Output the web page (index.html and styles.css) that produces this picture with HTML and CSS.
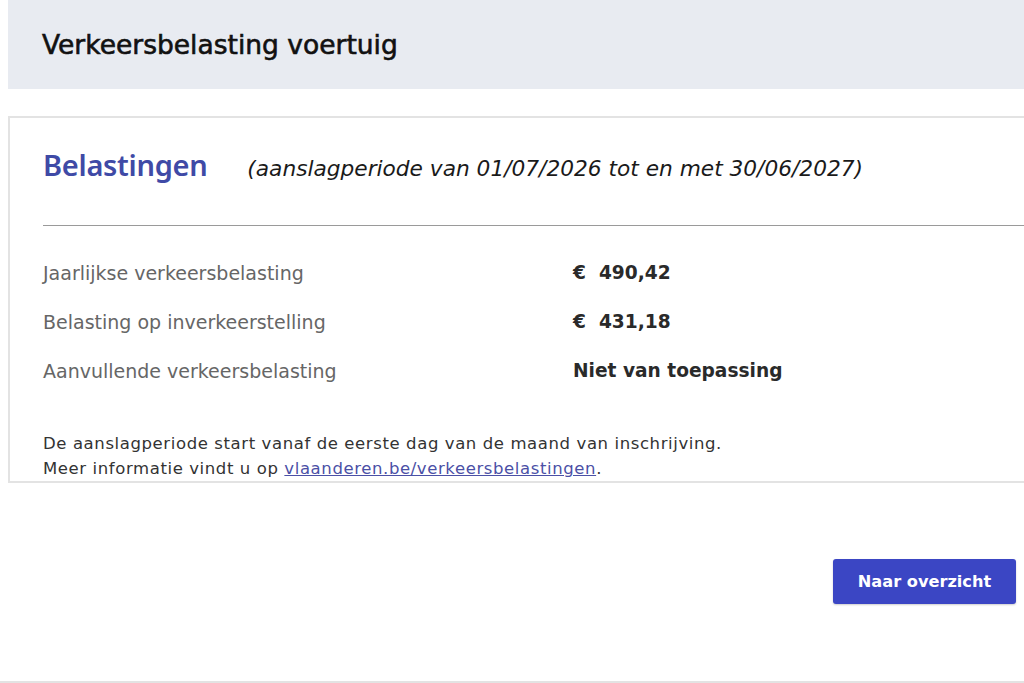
FILE: index.html
```html
<!DOCTYPE html>
<html lang="nl">
<head>
<meta charset="utf-8">
<title>Verkeersbelasting voertuig</title>
<link rel="stylesheet" href="styles.css">
</head>
<body>
<div class="page">
  <header class="page-header">
    <h1 class="page-title">Verkeersbelasting voertuig</h1>
  </header>
  <section class="card">
    <div class="card-head">
      <h2 class="card-title">Belastingen</h2>
      <span class="card-period">(aanslagperiode van 01/07/2026 tot en met 30/06/2027)</span>
    </div>
    <hr class="divider">
    <dl class="rows">
      <div class="row"><dt>Jaarlijkse verkeersbelasting</dt><dd>€&nbsp; 490,42</dd></div>
      <div class="row"><dt>Belasting op inverkeerstelling</dt><dd>€&nbsp; 431,18</dd></div>
      <div class="row"><dt>Aanvullende verkeersbelasting</dt><dd>Niet van toepassing</dd></div>
    </dl>
    <p class="note">De aanslagperiode start vanaf de eerste dag van de maand van inschrijving.<br>Meer informatie vindt u op <a href="#" class="link">vlaanderen.be/verkeersbelastingen</a>.</p>
  </section>
  <div class="actions">
    <button class="btn" type="button">Naar overzicht</button>
  </div>
  <div class="bottom-line"></div>
</div>
</body>
</html>
```
FILE: styles.css
```css
html, body {
  margin: 0;
  padding: 0;
  background: #fff;
  overflow: hidden;
}
body {
  font-family: "DejaVu Sans", "Noto Sans", sans-serif;
  color: #222;
  width: 1024px;
  height: 683px;
}
.page {
  margin-left: 8px;
  margin-right: -20px;
  display: flex;
  flex-direction: column;
  height: 683px;
}
.page-header {
  background: #e8ebf1;
  height: 89px;
  display: flex;
  align-items: center;
  padding-left: 34px;
}
.page-title {
  margin: 0;
  font-size: 26.5px;
  font-weight: 400;
  color: #111;
  -webkit-text-stroke: 0.6px #111;
}
.card {
  margin-top: 27px;
  border: 2px solid #e3e3e3;
  padding: 27px 0 0 33px;
}
.card-head {
  display: flex;
  align-items: baseline;
  gap: 40px;
  height: 48px;
}
.card-title {
  margin: 0;
  font-family: "Noto Sans", "DejaVu Sans", sans-serif;
  font-size: 29px;
  font-weight: 600;
  color: #3f4aa6;
  letter-spacing: -0.3px;
}
.card-period {
  font-style: italic;
  font-size: 21.7px;
  color: #1a1a1a;
}
.divider {
  margin: 32px 0 0 0;
  border: 0;
  border-top: 1px solid #9a9a9a;
}
.rows {
  margin: 35px 0 0 0;
}
.row {
  display: flex;
  height: 49px;
  line-height: 24px;
  align-items: flex-start;
}
.row dt {
  width: 530px;
  font-size: 19px;
  color: #666;
}
.row dd {
  margin: 0;
  font-size: 18.6px;
  font-weight: 700;
  color: #2a2a2a;
}
.note {
  margin: 23px 0 0 0;
  font-size: 16.5px;
  letter-spacing: 0.6px;
  line-height: 25px;
  color: #333;
}
.link {
  color: #4b50a6;
}
.actions {
  display: flex;
  justify-content: flex-end;
  padding-right: 28px;
  margin-top: 76px;
}
.btn {
  width: 183px;
  height: 45px;
  background: #3b46c4;
  color: #fff;
  border: 0;
  border-radius: 3px;
  font-family: inherit;
  font-size: 16.2px;
  font-weight: 700;
  box-shadow: 0 1px 2px rgba(0,0,0,0.2);
}
.bottom-line {
  margin-top: auto;
  margin-left: -8px;
  border-top: 2px solid #e3e3e3;
}
```
